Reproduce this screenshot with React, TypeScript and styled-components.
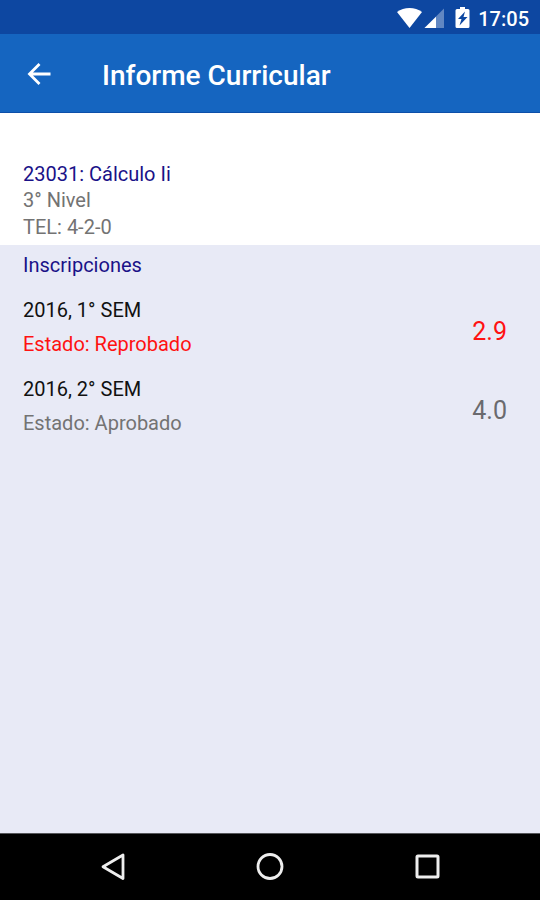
import React from 'react';
import styled, { createGlobalStyle } from 'styled-components';

const GlobalStyle = createGlobalStyle`
  *, *::before, *::after { box-sizing: border-box; }
  body { margin: 0; font-family: Roboto, sans-serif; background: #e8eaf6; }
  h1, h2, h3, p, ul { margin: 0; padding: 0; font-weight: 400; }
  ul { list-style: none; }
  button { border: 0; padding: 0; background: none; color: inherit; display: flex; align-items: center; justify-content: center; cursor: pointer; }
  svg { display: block; }
`;

const Screen = styled.div`
  display: flex;
  flex-direction: column;
  min-height: 100vh;
`;

const StatusBar = styled.div`
  display: flex;
  align-items: center;
  justify-content: flex-end;
  height: 34px;
  padding: 3px 11px 0 0;
  background: #0d47a1;
  color: #fff;
`;

const Clock = styled.time`
  margin-left: 8px;
  font-size: 20px;
  font-weight: 500;
  line-height: 24px;
`;

const AppBar = styled.header`
  display: flex;
  align-items: center;
  gap: 44px;
  height: 79px;
  padding: 5px 20px 0;
  border-bottom: 1px solid #0d4fa9;
  background: #1565c0;
  color: #fff;
`;

const BackButton = styled.button`
  width: 38px;
  height: 38px;
`;

const Title = styled.h1`
  font-size: 28px;
  font-weight: 500;
  line-height: 36px;
`;

const Course = styled.section`
  padding: 48px 23px 4px;
  background: #fff;
`;

const Heading = styled.h2`
  color: #1a1288;
  font-size: 20px;
  line-height: 26px;
`;

const Detail = styled.p`
  color: #737373;
  font-size: 20px;
  line-height: 27px;
`;

const Enrollments = styled.main`
  flex: 1;
  padding: 7px 23px;
  background: #e8eaf6;
`;

const List = styled.ul`
  display: flex;
  flex-direction: column;
  gap: 11px;
  padding-top: 15px;
`;

const Row = styled.li`
  display: flex;
  align-items: flex-end;
  justify-content: space-between;
  padding-right: 10px;
`;

const Term = styled.h3`
  color: #111;
  font-size: 20px;
  line-height: 34px;
`;

const State = styled.p<{ $failed: boolean }>`
  color: ${({ $failed }) => ($failed ? '#ff1212' : '#737373')};
  font-size: 20px;
  line-height: 34px;
`;

const Grade = styled.strong<{ $failed: boolean }>`
  color: ${({ $failed }) => ($failed ? '#ff1212' : '#6a6a6e')};
  font-size: 25px;
  font-weight: 400;
  line-height: 58px;
`;

const NavBar = styled.nav`
  display: flex;
  align-items: center;
  justify-content: center;
  gap: 109px;
  height: 67px;
  border-top: 1px solid #55565a;
  background: #000;
  color: #fff;
`;

const NavButton = styled.button`
  width: 48px;
  height: 48px;
`;

const enrollments = [
  { term: '2016, 1° SEM', state: 'Reprobado', grade: '2.9', failed: true },
  { term: '2016, 2° SEM', state: 'Aprobado', grade: '4.0', failed: false },
];

export default function App() {
  return (
    <Screen>
      <GlobalStyle />
      <StatusBar>
        <svg width="74" height="24" viewBox="0 0 74 24" fill="#fff" aria-hidden="true">
          <path d="M1 5C8 -.4 19 -.4 26 5L13.500 21Z" />
          <path d="M48 1.500V21H28.500Z" opacity=".35" />
          <path d="M40 9.700V21H28.500Z" />
          <path fillRule="evenodd" d="M64 2V0h5v2h3q1.500 0 1.500 1.500V19.500q0 1.500-1.500 1.500H61q-1.500 0-1.500-1.500V3.500Q59.500 2 61 2ZM69 4.500l-7 7.500h3.500l-2 6.500 8-8.500h-4Z" />
        </svg>
        <Clock>17:05</Clock>
      </StatusBar>
      <AppBar>
        <BackButton aria-label="Volver">
          <svg width="24" height="26" viewBox="0 0 24 26" fill="none" stroke="#fff" strokeWidth="2.800">
            <path d="M23.500 11H3M12.500 1L2.500 11l10 10" />
          </svg>
        </BackButton>
        <Title>Informe Curricular</Title>
      </AppBar>
      <Course>
        <Heading>23031: Cálculo Ii</Heading>
        <Detail>3° Nivel</Detail>
        <Detail>TEL: 4-2-0</Detail>
      </Course>
      <Enrollments>
        <Heading>Inscripciones</Heading>
        <List>
          {enrollments.map((item) => (
            <Row key={item.term}>
              <div>
                <Term>{item.term}</Term>
                <State $failed={item.failed}>Estado: {item.state}</State>
              </div>
              <Grade $failed={item.failed}>{item.grade}</Grade>
            </Row>
          ))}
        </List>
      </Enrollments>
      <NavBar>
        <NavButton aria-label="Atrás">
          <svg width="28" height="28" viewBox="0 0 28 28" fill="none" stroke="#eee" strokeWidth="2.800">
            <path d="M24 2v23.500L4 13.700Z" strokeLinejoin="round" />
          </svg>
        </NavButton>
        <NavButton aria-label="Inicio">
          <svg width="28" height="28" viewBox="0 0 28 28" fill="none" stroke="#eee" strokeWidth="2.800">
            <circle cx="14" cy="13.500" r="12" />
          </svg>
        </NavButton>
        <NavButton aria-label="Recientes">
          <svg width="28" height="28" viewBox="0 0 28 28" fill="none" stroke="#eee" strokeWidth="3">
            <rect x="4" y="3" width="21" height="21" rx="1" />
          </svg>
        </NavButton>
      </NavBar>
    </Screen>
  );
}
